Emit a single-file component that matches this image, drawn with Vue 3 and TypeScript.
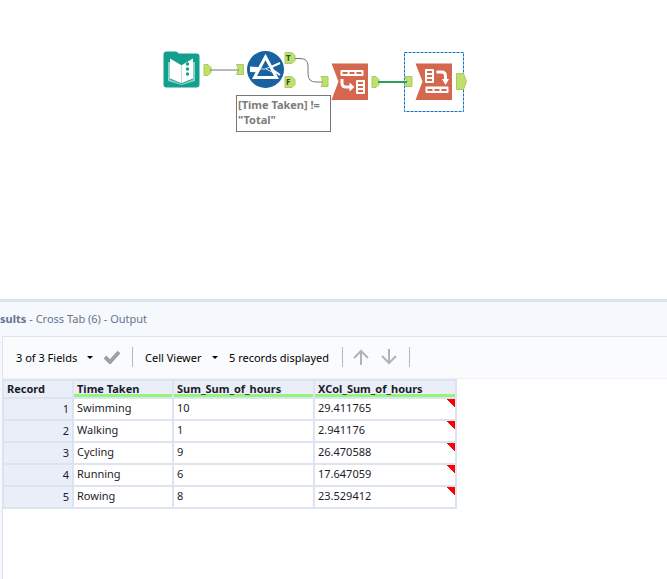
<script setup lang="ts">
interface ResultRow {
  name: string
  sum: string
  share: string
}

const rows: ResultRow[] = [
  { name: 'Swimming', sum: '10', share: '29.411765' },
  { name: 'Walking', sum: '1', share: '2.941176' },
  { name: 'Cycling', sum: '9', share: '26.470588' },
  { name: 'Running', sum: '6', share: '17.647059' },
  { name: 'Rowing', sum: '8', share: '23.529412' },
]
const columns: string[] = ['Time Taken', 'Sum_Sum_of_hours', 'XCol_Sum_of_hours']
</script>

<template>
  <main class="designer">
    <section class="canvas" aria-label="Workflow canvas">
      <svg class="selection" width="60" height="60" viewBox="0 0 60 60" aria-hidden="true">
        <rect x="0.500" y="0.500" width="59" height="59" />
      </svg>
      <svg class="wires" width="480" height="120" viewBox="0 0 480 120" aria-hidden="true">
        <g class="anchor">
          <path d="M204 64.500h4l3 3v5l-3 3h-4z" />
          <path d="M236.500 64.500h7v10h-7l2-5z" />
          <path d="M285 52.500h7l3 3v5l-3 3h-7z" />
          <path d="M285 76.500h7l3 3v5l-3 3h-7z" />
          <path d="M321 76.500h7v10h-7l2-5z" />
          <path d="M372 76.500h4l3 3v5l-3 3h-4z" />
          <path d="M405 76.500h7v10h-7l2-5z" />
          <path d="M456.500 73.500h7l3 8-3 8h-7z" />
        </g>
        <path class="wire" d="M210 70H239" />
        <path class="wire" d="M295 58.500H300Q308 58.500 308 66V74Q308 82 316 82H323" />
        <path class="wire active" d="M378 82H407" />
        <text class="port" x="286" y="61">T</text>
        <text class="port" x="286" y="85">F</text>
      </svg>

      <svg class="tool input-tool" width="38" height="38" viewBox="0 0 38 38" aria-label="Input">
        <path d="M3.500 0.500h9q2 0 3 2h18q3 0 3 3v28q0 3-3 3H3.500q-3 0-3-3V3.500q0-3 3-3z" fill="#129f8c" />
        <path d="M5 11h2v17.500l11.500 4.500L30 28.500V11h2v19l-13.500 4L5 30z" fill="#8fd0c7" />
        <path d="M7 7.500l11 6.500v18L7 27.500z" fill="#fff" />
        <path d="M19 14l11-6.500v20L19 32z" fill="#fff" />
        <path d="M18.500 14v18" stroke="#b7ded8" fill="none" />
        <g fill="#129f8c"><circle cx="24.500" cy="13" r="1.700" /><circle cx="24.500" cy="18" r="1.700" /><circle cx="24.500" cy="23" r="1.700" /></g>
      </svg>

      <svg class="tool filter-tool" width="39" height="39" viewBox="0 0 39 39" aria-label="Filter">
        <circle cx="19.500" cy="19.500" r="18.500" fill="#17629f" />
        <path d="M4 16.500l12 1-2 5-10-0.500z" fill="#fff" />
        <path d="M23 18l11-5M27 20l7 5" stroke="#fff" stroke-width="2" />
        <path d="M19.500 7L8.500 27.500H30.500z" fill="#17629f" stroke="#fff" stroke-width="3" />
        <path d="M13 19h6l5-2M20 19l6 3" stroke="#d4e3ef" fill="none" />
      </svg>

      <svg class="tool cross-tool" width="37" height="37" viewBox="0 0 37 37" aria-label="Cross Tab">
        <path d="M0.500 0.500H37V37H0.500L7.500 18.500z" fill="#d5674f" />
        <rect x="9.500" y="7" width="23" height="6" rx="1" fill="#fff" />
        <path d="M11.500 10h5M18.500 10h5M25.500 10h5" stroke="#d5674f" stroke-width="2" />
        <path d="M11 16v4q0 4 4 4h5" fill="none" stroke="#fff" stroke-width="3" />
        <path d="M18.500 19.500l5 4.500-5 4.500z" fill="#fff" />
        <rect x="25" y="17" width="9" height="14" rx="1" fill="#fff" />
        <path d="M27 20h5M27 24h5M27 28h5" stroke="#d5674f" stroke-width="2" />
      </svg>

      <svg class="tool transpose-tool" width="37" height="37" viewBox="0 0 37 37" aria-label="Cross Tab (6)">
        <path d="M0.500 0.500H37V37H0.500L7.500 18.500z" fill="#d5674f" />
        <rect x="10" y="6" width="9" height="14" rx="1" fill="#fff" />
        <path d="M12 9h5M12 13h5M12 17h5" stroke="#d5674f" stroke-width="2" />
        <path d="M21.500 9h5q4 0 4 4v4" fill="none" stroke="#fff" stroke-width="3" />
        <path d="M27 16h7l-3.500 6z" fill="#fff" />
        <rect x="10.500" y="23.500" width="23" height="6.500" rx="1" fill="#fff" />
        <path d="M12.500 27h5M19.500 27h5M26.500 27h5" stroke="#d5674f" stroke-width="2" />
      </svg>

      <p class="annotation">[Time Taken] !=<br />"Total"</p>
    </section>

    <section class="results">
      <h1 class="title"><b>sults</b><span>- Cross Tab (6) - Output</span></h1>
      <div class="panel">
        <div class="toolbar">
          <button type="button" class="fields">3 of 3 Fields <i class="caret"></i></button>
          <button type="button" class="apply" aria-label="Apply">
            <svg width="18" height="14" viewBox="0 0 18 14"><path d="M2 7l5 5L16 2" fill="none" stroke="#a0a0a0" stroke-width="4" /></svg>
          </button>
          <span class="rule"></span>
          <button type="button" class="viewer">Cell Viewer <i class="caret"></i></button>
          <span class="count">5 records displayed</span>
          <span class="rule"></span>
          <button type="button" class="arrow" aria-label="Previous">
            <svg width="16" height="16" viewBox="0 0 16 16"><path d="M8 16V2M1 9l7-7 7 7" /></svg>
          </button>
          <button type="button" class="arrow" aria-label="Next">
            <svg width="16" height="16" viewBox="0 0 16 16"><path d="M8 0v14M1 7l7 7 7-7" /></svg>
          </button>
          <span class="rule"></span>
        </div>
        <table>
          <colgroup>
            <col class="c-record" /><col class="c-time" /><col class="c-sum" /><col class="c-share" />
          </colgroup>
          <thead>
            <tr>
              <th scope="col">Record</th>
              <th v-for="c in columns" :key="c" scope="col" class="typed">{{ c }}</th>
            </tr>
          </thead>
          <tbody>
            <tr v-for="(row, i) in rows" :key="row.name">
              <th scope="row">{{ i + 1 }}</th>
              <td>{{ row.name }}</td>
              <td>{{ row.sum }}</td>
              <td class="flagged">{{ row.share }}</td>
            </tr>
          </tbody>
        </table>
      </div>
    </section>
  </main>
</template>

<style>
body {
  margin: 0;
  background: #fff;
}
</style>

<style scoped>
.designer {
  display: flex;
  flex-direction: column;
  min-height: 100vh;
  font-family: "Noto Sans", "Open Sans", sans-serif;
  font-size: 11px;
  color: #1c1c28;
}
.canvas {
  position: relative;
  height: 299px;
  overflow: hidden;
}
.wires,
.tool,
.selection {
  position: absolute;
  display: block;
}
.wires { left: 0; top: 0; }
.input-tool { left: 163px; top: 51px; }
.filter-tool { left: 246px; top: 50px; }
.cross-tool { left: 331px; top: 63px; }
.transpose-tool { left: 415px; top: 63px; }
.selection { left: 404px; top: 52px; }
.selection rect {
  fill: none;
  stroke: #0b74d1;
  stroke-dasharray: 3 1;
}
.anchor path {
  fill: #bfe06c;
  stroke: #a9cc5c;
}
.wire {
  fill: none;
  stroke: #777;
}
.wire.active {
  stroke: #2f9e56;
  stroke-width: 2;
}
.port {
  font-size: 8px;
  font-weight: 700;
  fill: #2d4a2d;
}
.annotation {
  position: absolute;
  left: 236px;
  top: 95px;
  box-sizing: border-box;
  width: 95px;
  height: 37px;
  margin: 0;
  padding: 1px 0 0 1px;
  border: 1px solid #777;
  background: #fff;
  font-weight: 700;
  line-height: 15px;
  white-space: nowrap;
  color: #7c7c7c;
}
.results {
  flex: 1;
  display: flex;
  flex-direction: column;
  border-top: 3px solid #dde4f1;
  background: #f5f8fd;
}
.title {
  display: flex;
  gap: 3px;
  margin: 0;
  font-size: 11px;
  font-weight: 400;
  line-height: 34px;
  color: #66748f;
}
.panel {
  flex: 1;
  margin-left: 2px;
  border-top: 1px solid #dde4f1;
  border-left: 1px solid #dde4f1;
  background: #fff;
}
.toolbar {
  display: flex;
  align-items: center;
  box-sizing: border-box;
  height: 42px;
  padding: 0 0 1px 13px;
  border-bottom: 1px solid #eef0f4;
  background: #fafbfd;
  color: #000;
}
button {
  display: flex;
  align-items: center;
  padding: 0;
  border: 0;
  background: none;
  font: inherit;
  color: inherit;
  white-space: nowrap;
}
.caret {
  border: 3px solid transparent;
  border-top-color: #000;
  border-bottom: 0;
}
.fields { justify-content: space-between; width: 77px; }
.apply { margin: 0 11px 0 10px; }
.viewer { justify-content: space-between; width: 73px; margin-left: 12px; }
.count { width: 101px; margin: 0 12px 0 11px; white-space: nowrap; }
.rule {
  width: 1px;
  height: 20px;
  background: #b5b8bf;
}
.arrow { margin-left: 10px; }
.arrow + .arrow { margin: 0 12px; }
.arrow path {
  fill: none;
  stroke: #b3b3b3;
  stroke-width: 2;
}
table {
  width: 453px;
  margin-left: -1px;
  table-layout: fixed;
  border-collapse: collapse;
  border-spacing: 0;
}
.c-record { width: 70px; }
.c-time { width: 100px; }
.c-sum { width: 141px; }
.c-share { width: 142px; }
th,
td {
  box-sizing: border-box;
  height: 22px;
  padding: 0 3px 2px;
  border: 2px solid #dde4f1;
  line-height: 16px;
  text-align: left;
}
th { background: #e9eef9; }
thead th {
  height: 18px;
  padding: 0 3px;
  line-height: 14px;
}
.typed { box-shadow: inset 0 -3px #96f578; }
tbody th {
  padding: 1px 3px 1px;
  font-weight: 400;
  text-align: right;
}
.flagged {
  background: linear-gradient(to top right, transparent 50%, #f00 50%) top right / 8px 8px no-repeat;
}
</style>
